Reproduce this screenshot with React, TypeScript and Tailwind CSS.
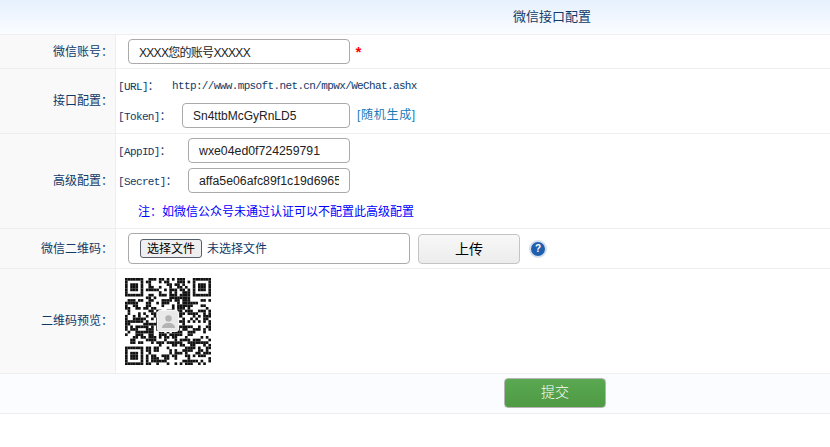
import type { ReactNode } from "react";

const sans = "font-['Liberation_Sans','Noto_Sans_CJK_SC',sans-serif]";
const mono = "font-['Liberation_Mono','Noto_Sans_CJK_SC',monospace]";

function Row({ label, className, children }: { label: string; className: string; children: ReactNode }) {
  return (
    <div className={`flex border-b border-[#eeeeee] ${className}`}>
      <div className="w-[116px] shrink-0 bg-[#f9f9f9] border-r border-[#eeeeee] flex items-center justify-end pr-[2px] text-[12px] text-[#103a68]">
        {label}：
      </div>
      <div className="flex-1 min-w-0">{children}</div>
    </div>
  );
}

function Field({ value, width, text = "text-[12.3px]" }: { value: string; width: string; text?: string }) {
  return (
    <input
      readOnly
      value={value}
      className={`${width} ${text} h-[25px] rounded-[4px] border border-[#aaaaaa] bg-white px-[10px] text-[#222222] outline-none ${sans}`}
    />
  );
}

function Tag({ children, width }: { children: string; width: string }) {
  return <span className={`${width} shrink-0 pt-[3px] text-[11px] tracking-[-0.63px] text-[#103a68] ${mono}`}>{children}</span>;
}

// finder pattern test for the three corners of the code
function isFinder(x: number, y: number, n: number) {
  const corners = [
    [0, 0],
    [n - 7, 0],
    [0, n - 7],
  ];
  for (const [cx, cy] of corners) {
    const dx = x - cx;
    const dy = y - cy;
    if (dx >= -1 && dx <= 7 && dy >= -1 && dy <= 7) {
      const ring = dx === 0 || dx === 6 || dy === 0 || dy === 6;
      const core = dx >= 2 && dx <= 4 && dy >= 2 && dy <= 4;
      const inside = dx >= 0 && dx <= 6 && dy >= 0 && dy <= 6;
      return { hit: true, on: inside && (ring || core) };
    }
  }
  return { hit: false, on: false };
}

function QrCode() {
  const n = 33;
  const cells: ReactNode[] = [];
  for (let y = 0; y < n; y++) {
    for (let x = 0; x < n; x++) {
      const f = isFinder(x, y, n);
      const noise = Math.sin(x * 12.9898 + y * 78.233 + x * y * 0.37) * 43758.5453;
      const on = f.hit ? f.on : noise - Math.floor(noise) > 0.48;
      if (on) cells.push(<rect key={`${x}-${y}`} x={x} y={y} width="1.02" height="1.02" fill="#111" />);
    }
  }
  return (
    <div className="relative w-[86px] h-[87px]">
      <svg width="86" height="87" viewBox="0 0 33 33" preserveAspectRatio="none" className="block blur-[0.3px]">
        {cells}
      </svg>
      <div className="absolute left-[32px] top-[32px] w-[22px] h-[22px] rounded-[3px] bg-[#e9e9e9] border border-[#f7f7f7] flex items-center justify-center">
        <svg width="17" height="17" viewBox="0 0 17 17">
          <circle cx="8.5" cy="5.5" r="3.2" fill="#b4b4b4" />
          <path d="M2 15c0-3.500 3-4.500 4.500-5h4c1.500.5 4.500 1.500 4.500 5z" fill="#b4b4b4" />
        </svg>
      </div>
    </div>
  );
}

export default function App() {
  return (
    <div className={`w-[830px] h-[447px] bg-white overflow-hidden text-[12px] ${sans}`}>
      <div className="h-[35px] border-b border-[#eeeeee] bg-gradient-to-b from-[#e6f0fd] to-[#fbfdff] flex items-center pl-[513px] text-[13px] text-[#103a68]">
        微信接口配置
      </div>

      <Row label="微信账号" className="h-[34px]">
        <div className="flex items-center h-full pl-[12px]">
          <Field value="XXXX您的账号XXXXX" width="w-[222px]" text="text-[12px] tracking-[-0.7px]" />
          <span className={`ml-[4px] pt-[8px] text-[15px] font-bold text-[#ff0000] ${mono}`}>*</span>
        </div>
      </Row>

      <Row label="接口配置" className="h-[65px]">
        <div className="flex flex-col pl-[2px]">
          <div className="flex items-center h-[34px]">
            <Tag width="w-[54px]">[URL]：</Tag>
            <span className={`pt-[1px] text-[11px] tracking-[-0.63px] text-[#103a68] ${mono}`}>http://www.mpsoft.net.cn/mpwx/WeChat.ashx</span>
          </div>
          <div className="flex items-center">
            <Tag width="w-[64px]">[Token]：</Tag>
            <Field value="Sn4ttbMcGyRnLD5" width="w-[168px]" text="text-[12px]" />
            <span className="ml-[7px] mb-[2px] text-[12px] tracking-[0.7px] text-[#1b7ab8]">[随机生成]</span>
          </div>
        </div>
      </Row>

      <Row label="高级配置" className="h-[95px]">
        <div className="flex flex-col gap-[5px] pl-[2px] pt-[4px]">
          <div className="flex items-center">
            <Tag width="w-[70px]">[AppID]：</Tag>
            <Field value="wxe04ed0f724259791" width="w-[162px]" />
          </div>
          <div className="flex items-center">
            <Tag width="w-[70px]">[Secret]：</Tag>
            <Field value="affa5e06afc89f1c19d6965" width="w-[162px]" />
          </div>
          <div className="pl-[20px] pt-[5px] text-[12px] text-[#0000ff]">注：如微信公众号未通过认证可以不配置此高级配置</div>
        </div>
      </Row>

      <Row label="微信二维码" className="h-[40px]">
        <div className="flex items-center h-full pl-[12px]">
          <div className="w-[282px] h-[31px] rounded-[4px] border border-[#aaaaaa] bg-white flex items-center pl-[11px] text-[12px] text-[#103a68]">
            <span className="h-[19px] px-[6px] rounded-[3px] border border-[#555f6b] bg-[#efefef] flex items-center text-[12px] text-black">
              选择文件
            </span>
            <span className="ml-[5px]">未选择文件</span>
          </div>
          <button className="ml-[8px] w-[102px] h-[30px] pt-[2px] rounded-[4px] border border-[#c4c4c4] bg-gradient-to-b from-[#f8f8f8] to-[#ececec] text-[14px] text-black">
            上传
          </button>
          <span className="ml-[9px] w-[18px] h-[18px] rounded-full bg-[#1f5fae] border-2 border-[#d5dfec] flex items-center justify-center text-[10px] font-bold text-white">
            ?
          </span>
        </div>
      </Row>

      <Row label="二维码预览" className="h-[105px]">
        <div className="pl-[9px] pt-[9px]">
          <QrCode />
        </div>
      </Row>

      <div className="h-[40px] border-b border-[#eeeeee] bg-[#fbfcff] flex items-center pl-[504px] pb-[2px]">
        <button className="w-[102px] h-[30px] rounded-[4px] border border-[#b5b5b5] bg-gradient-to-b from-[#5aa851] to-[#4f9a45] text-[14px] font-light text-white">
          提交
        </button>
      </div>
    </div>
  );
}
